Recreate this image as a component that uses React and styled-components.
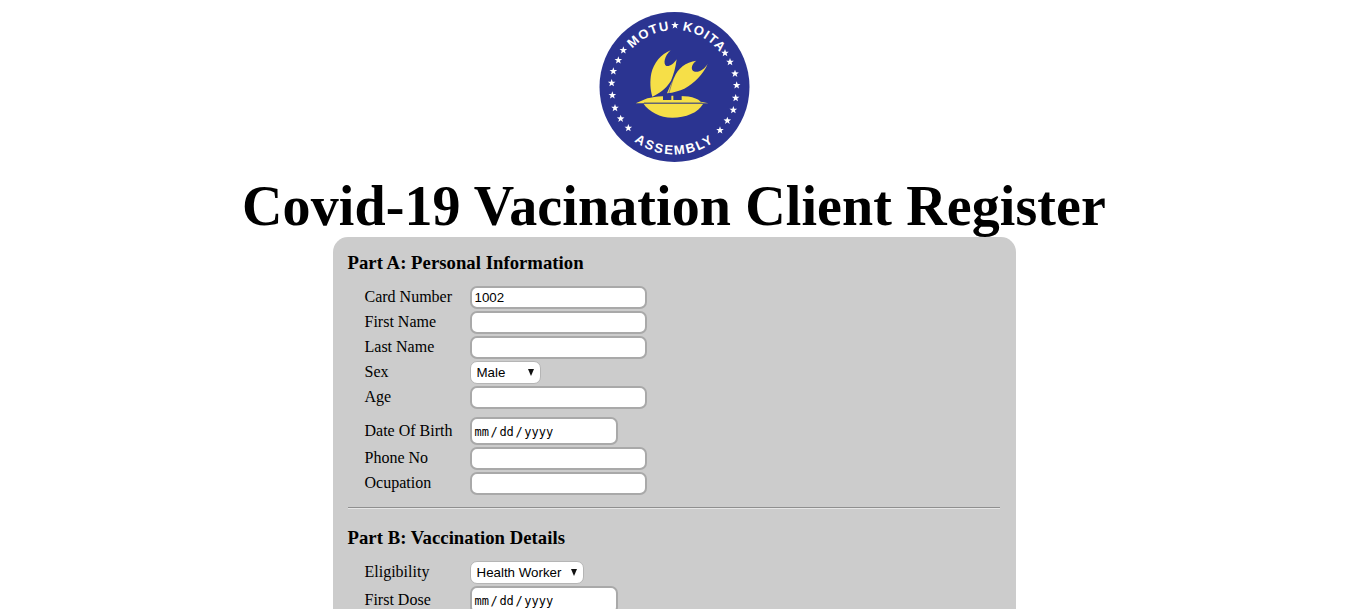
import styled, { createGlobalStyle } from "styled-components";

const GlobalStyle = createGlobalStyle`
  html, body {
    margin: 0;
    height: 609px;
    overflow: hidden;
    background: #fff;
    color: #000;
    font-family: "Liberation Serif", "Times New Roman", serif;
  }
`;

const Page = styled.div`
  display: flex;
  flex-direction: column;
  align-items: center;
  padding-top: 12px;
  padding-right: 1px;
`;

const Logo = styled.svg`
  display: block;
  width: 151px;
  height: 151px;
`;

const Title = styled.h1`
  margin: 12px 0 0;
  font-size: 56px;
  line-height: 62px;
  letter-spacing: 0.11px;
  font-weight: bold;
  text-align: center;
`;

const Panel = styled.form`
  width: 683px;
  box-sizing: border-box;
  padding: 15px 16px 15px 15px;
  background: #ccc;
  border-radius: 15px;
`;

const Heading = styled.h3`
  margin: 0 0 12px;
  font-size: 18.72px;
  line-height: 22px;
  letter-spacing: 0.03px;
  font-weight: bold;
`;

const Rows = styled.div`
  display: flex;
  flex-direction: column;
  gap: 2px;
  padding-left: 17px;
`;

const Row = styled.div`
  display: flex;
  align-items: center;
  margin-bottom: ${(p) => p.$after || 0}px;
`;

const Label = styled.label`
  width: 105px;
  font-size: 16px;
  line-height: 18px;
  margin-top: ${(p) => (p.$date ? 0 : -2)}px;
`;

const TextInput = styled.input`
  width: 177px;
  height: 23px;
  box-sizing: border-box;
  padding: 1px 2px 1px 3px;
  border: 2px solid #a9a9a9;
  border-radius: 7px;
  background: #fff;
  font-family: "Liberation Sans", Arial, sans-serif;
  font-size: 13.33px;
  color: #000;
  outline: none;
`;

const DateInput = styled.input`
  width: 148px;
  height: 28px;
  box-sizing: border-box;
  padding: 3px 2px 1px;
  border: 2px solid #a9a9a9;
  border-radius: 7px;
  background: #fff;
  font-family: "DejaVu Sans Mono", monospace;
  font-size: 12px;
  color: #000;
  outline: none;

  &::-webkit-calendar-picker-indicator {
    display: none;
  }

  &::-webkit-datetime-edit-text {
    padding: 0 0.6px;
  }
`;

const SelectWrap = styled.div`
  position: relative;
  width: ${(p) => p.$width}px;
  height: 23px;
`;

const Select = styled.select`
  appearance: none;
  display: block;
  width: 100%;
  height: 100%;
  box-sizing: border-box;
  padding: 0 0 0 6px;
  border: 1px solid #b5b5b5;
  border-radius: 7px;
  background: #fff;
  font-family: "Liberation Sans", Arial, sans-serif;
  font-size: 13.33px;
  color: #000;
  outline: none;
`;

const Arrow = styled.span`
  position: absolute;
  right: 7px;
  top: 8px;
  width: 0;
  height: 0;
  border-left: 3.5px solid transparent;
  border-right: 3.5px solid transparent;
  border-top: 7px solid #111;
  pointer-events: none;
`;

const Divider = styled.hr`
  margin: 12px 0 18px;
  border: 0;
  border-top: 1px solid #8f8f8f;
  border-bottom: 1px solid #e6e6e6;
`;

const BLUE = "#2b3491";
const YELLOW = "#f6df48";

const starPoints = (cx, cy, r) => {
  const pts = [];
  for (let i = 0; i < 10; i++) {
    const rad = i % 2 === 0 ? r : r * 0.42;
    const a = (Math.PI / 5) * i - Math.PI / 2;
    pts.push(`${(cx + rad * Math.cos(a)).toFixed(2)},${(cy + rad * Math.sin(a)).toFixed(2)}`);
  }
  return pts.join(" ");
};

// star centres read off the reference (3x crop, logo origin at 27,20)
const stars = [
  [100, 135], [85, 165], [70, 198], [65, 233], [67, 270], [75, 308], [92, 340], [115, 368],
  [405, 143], [420, 170], [435, 205], [440, 240], [437, 278], [430, 314], [412, 346], [390, 375],
  [255, 60],
].map(([x, y]) => [(x - 27) / 3, (y - 20) / 3]);

const LogoMark = () => (
  <Logo viewBox="0 0 151 151" aria-label="Motu Koita Assembly">
    <defs>
      <path id="arcTop" d="M 18.5 75 A 57 57 0 0 1 132.5 75" />
      <path id="arcBottom" d="M 8 75 A 67.5 67.5 0 0 0 143 75" />
    </defs>
    <circle cx="75.5" cy="75" r="75" fill={BLUE} />
    {stars.map(([x, y]) => (
      <polygon key={`${x}-${y}`} points={starPoints(x, y, 4)} fill="#fff" />
    ))}
    <g fontFamily="Liberation Sans, Arial, sans-serif" fontWeight="bold" fontSize="13" fill="#fff">
      <text letterSpacing="1.2">
        <textPath href="#arcTop" startOffset="35.5%" textAnchor="middle">MOTU</textPath>
      </text>
      <text letterSpacing="1.2">
        <textPath href="#arcTop" startOffset="67%" textAnchor="middle">KOITA</textPath>
      </text>
      <text letterSpacing="1.9" fontSize="13">
        <textPath href="#arcBottom" startOffset="50%" textAnchor="middle">ASSEMBLY</textPath>
      </text>
    </g>
    {/* sails and hull, drawn in crop pixels of the 75px boat crop */}
    <g transform="translate(40 28) scale(0.3333)">
      <path
        fill={YELLOW}
        d="M95 31 C66 42 44 70 37 100 C32 125 34 150 40 170 C60 160 80 148 96 122 C104 104 110 82 113 58 C104 72 92 80 82 78 C72 72 76 48 95 31 Z"
      />
      <path
        fill={YELLOW}
        d="M172 62 C140 66 116 86 106 112 C98 128 90 145 84 160 C104 158 122 152 136 146 C166 130 192 104 206 72 C196 88 178 100 164 94 C154 88 158 72 172 62 Z"
      />
      <path stroke={BLUE} strokeWidth="1.5" fill="none" d="M102 118 L88 165" />
      <path fill={YELLOW} d="M13 180 C24 172 60 168 100 167 C130 167 170 168 185 185 L208 190 L-10 190 Z" />
      <path fill={YELLOW} d="M14 192 L192 192 C178 218 140 233 100 233 C62 233 32 216 14 192 Z" />
      <path stroke="#8d8a5a" strokeWidth="2.5" fill="none" d="M15 188 L190 188" />
      <rect x="72" y="163" width="25" height="17" fill={BLUE} />
      <rect x="103" y="163" width="25" height="17" fill={BLUE} />
    </g>
  </Logo>
);

const TextField = ({ label, value, after }) => (
  <Row $after={after}>
    <Label>{label}</Label>
    <TextInput type="text" defaultValue={value} />
  </Row>
);

const DateField = ({ label }) => (
  <Row>
    <Label $date>{label}</Label>
    <DateInput type="date" />
  </Row>
);

const SelectField = ({ label, width, options }) => (
  <Row>
    <Label>{label}</Label>
    <SelectWrap $width={width}>
      <Select>
        {options.map((o) => (
          <option key={o}>{o}</option>
        ))}
      </Select>
      <Arrow />
    </SelectWrap>
  </Row>
);

export default function App() {
  return (
    <>
      <GlobalStyle />
      <Page>
        <LogoMark />
        <Title>Covid-19 Vacination Client Register</Title>
        <Panel>
          <Heading>Part A: Personal Information</Heading>
          <Rows>
            <TextField label="Card Number" value="1002" />
            <TextField label="First Name" />
            <TextField label="Last Name" />
            <SelectField label="Sex" width={71} options={["Male", "Female"]} />
            <TextField label="Age" after={6} />
            <DateField label="Date Of Birth" />
            <TextField label="Phone No" />
            <TextField label="Ocupation" />
          </Rows>
          <Divider />
          <Heading>Part B: Vaccination Details</Heading>
          <Rows>
            <SelectField label="Eligibility" width={114} options={["Health Worker", "Other"]} />
            <DateField label="First Dose" />
          </Rows>
        </Panel>
      </Page>
    </>
  );
}
